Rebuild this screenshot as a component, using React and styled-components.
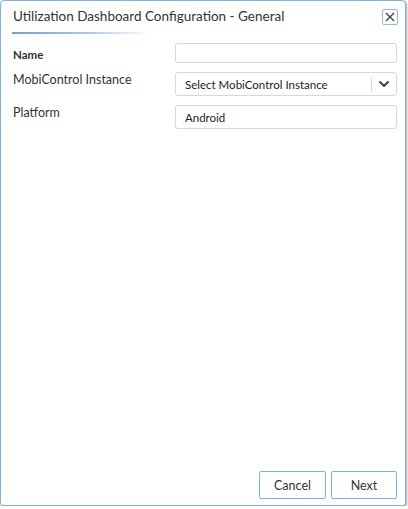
import React from "react";
import styled, { createGlobalStyle } from "styled-components";

const GlobalStyle = createGlobalStyle`
  html, body {
    margin: 0;
    padding: 0;
    background: #ffffff;
    font-family: "Lato", "Open Sans", sans-serif;
    color: #333333;
  }
`;

const Dialog = styled.div`
  box-sizing: border-box;
  width: 406px;
  height: 506px;
  border: 1px solid #7eb0ee;
  border-radius: 4px 4px 3px 3px;
  box-shadow: 1px 1px 2px rgba(0, 0, 0, 0.35);
  background: #ffffff;
  display: flex;
  flex-direction: column;
  padding: 0 7px 6px 11px;
`;

const Header = styled.div`
  display: flex;
  align-items: flex-start;
  justify-content: space-between;
  padding-top: 6px;
`;

const TitleBlock = styled.div`
  display: flex;
  flex-direction: column;
`;

const Title = styled.h1`
  margin: 0;
  padding-left: 1px;
  font-size: 13.5px;
  font-weight: 400;
  line-height: 18px;
  color: #333333;
`;

const TitleRule = styled.div`
  margin-top: 7px;
  width: 138px;
  height: 2px;
  background: linear-gradient(to right, #6f9ee0 0%, #a9c6f0 55%, rgba(255, 255, 255, 0) 100%);
`;

const CloseButton = styled.button`
  box-sizing: border-box;
  width: 16px;
  height: 16px;
  margin-top: 2px;
  padding: 0;
  border: 1px solid #8db8f0;
  border-radius: 2px;
  background: #ffffff;
  display: flex;
  align-items: center;
  justify-content: center;
  color: #444444;
`;

const Form = styled.div`
  display: flex;
  flex-direction: column;
  gap: 9px;
  margin-top: 9px;
  padding-right: 1px;
`;

const Row = styled.div`
  display: grid;
  grid-template-columns: 163px 1fr;
  align-items: start;
`;

const Label = styled.label`
  padding-left: 1px;
  margin-top: ${(p) => p.$top || 0}px;
  font-size: ${(p) => p.$size || 12.5}px;
  font-weight: ${(p) => (p.$bold ? 700 : 400)};
  line-height: 15px;
  color: #333333;
`;

const Field = styled.div`
  box-sizing: border-box;
  height: ${(p) => p.$h}px;
  border: 1px solid #d8d8d8;
  border-radius: 3px;
  background: #ffffff;
  display: flex;
  align-items: center;
  padding-left: 9px;
  font-size: 11.5px;
  color: #222222;
`;

const SelectBox = styled(Field)`
  padding-left: 0;
  justify-content: space-between;
`;

const SelectText = styled.span`
  padding-left: 9px;
`;

const SelectArrow = styled.span`
  display: flex;
  align-items: center;
  justify-content: center;
  width: 24px;
  height: 15px;
  border-left: 1px solid #d8d8d8;
  color: #333333;
`;

const Spacer = styled.div`
  flex: 1;
`;

const Footer = styled.div`
  display: flex;
  justify-content: flex-end;
  gap: 5px;
  padding-right: 1px;
`;

const Button = styled.button`
  box-sizing: border-box;
  width: ${(p) => p.$w}px;
  height: 28px;
  border: 1px solid #7eaff0;
  border-radius: 2px;
  background: #ffffff;
  font-family: inherit;
  font-size: 12.5px;
  color: #333333;
  padding: 0;
`;

export default function App() {
  return (
    <>
      <GlobalStyle />
      <Dialog>
        <Header>
          <TitleBlock>
            <Title>Utilization Dashboard Configuration - General</Title>
            <TitleRule />
          </TitleBlock>
          <CloseButton aria-label="Close">
            <svg width="10" height="10" viewBox="0 0 10 10">
              <path d="M1 1 L9 9 M9 1 L1 9" stroke="#444" strokeWidth="1.4" />
            </svg>
          </CloseButton>
        </Header>
        <Form>
          <Row>
            <Label $size={11.5} $bold $top={4}>Name</Label>
            <Field $h={20} />
          </Row>
          <Row>
            <Label $top={0}>MobiControl Instance</Label>
            <SelectBox $h={24}>
              <SelectText>Select MobiControl Instance</SelectText>
              <SelectArrow>
                <svg width="12" height="8" viewBox="0 0 12 8">
                  <path d="M1.5 1.5 L6 6 L10.5 1.5" fill="none" stroke="#333" strokeWidth="1.8" />
                </svg>
              </SelectArrow>
            </SelectBox>
          </Row>
          <Row>
            <Label $top={0}>Platform</Label>
            <Field $h={24}>Android</Field>
          </Row>
        </Form>
        <Spacer />
        <Footer>
          <Button $w={67}>Cancel</Button>
          <Button $w={66}>Next</Button>
        </Footer>
      </Dialog>
    </>
  );
}
